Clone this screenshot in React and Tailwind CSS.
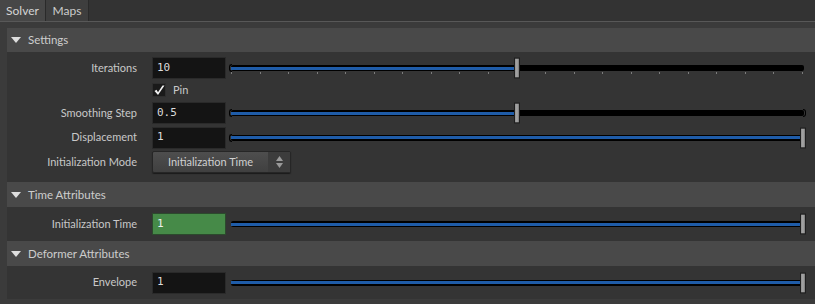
import React from 'react';

const font = { fontFamily: 'Lato, "Noto Sans", sans-serif' };

function Slider({ value, ticks = 0, capLeft = true, capRight = false }) {
  const pos = 2 + value * 572; // handle centre within the 577px box
  return (
    <div className="relative ml-[3px] h-full w-[577px]">
      {capLeft && (
        <div className="absolute left-0 top-1/2 h-[8px] w-[3px] -translate-y-1/2 rounded-l-[3px] border-y border-l border-black" />
      )}
      {capRight && (
        <div className="absolute right-0 top-1/2 h-[8px] w-[3px] -translate-y-1/2 rounded-r-[3px] border-y border-r border-black" />
      )}
      <div className="absolute left-[2px] right-[2px] top-1/2 flex h-[6px] -translate-y-1/2 items-center rounded-[2px] bg-black">
        <div className="h-[3px] bg-[#1f5ca8]" style={{ width: `${value * 100}%` }} />
      </div>
      {ticks > 0 && (
        <div className="absolute left-[2px] right-[3px] top-[15px] flex justify-between">
          {Array.from({ length: ticks + 1 }).map((_, i) => (
            <div key={i} className="h-[2px] w-px bg-[#7c7c7c]" />
          ))}
        </div>
      )}
      <div
        className="absolute top-1/2 h-[21px] w-[6px] -translate-y-1/2 border border-[#1e1e1e] bg-gradient-to-r from-[#8e8e8e] via-[#a8a8a8] to-[#7a7a7a]"
        style={{ left: pos - 3 }}
      />
    </div>
  );
}

function Field({ text, green }) {
  return (
    <div
      className={`flex h-[22px] w-[74px] items-center border px-[4px] text-[11px] ${
        green ? 'border-[#2c4a2d] bg-[#468a48] text-[#f0f0f0]' : 'border-[#2a2a2a] bg-[#141414] text-[#dcdcdc]'
      }`}
      style={{ fontFamily: '"DejaVu Sans Mono", monospace' }}
    >
      {text}
    </div>
  );
}

function Row({ label, h, children }) {
  return (
    <div className={`flex items-center ${h}`}>
      <div className="w-[130px] shrink-0 text-right text-[11px] text-[#c8c8c8]">{label}</div>
      <div className="ml-[15px] flex h-full flex-1 items-center">{children}</div>
    </div>
  );
}

function Header({ title, h }) {
  return (
    <div className={`flex items-center bg-[#494949] ${h}`}>
      <svg width="10" height="6" viewBox="0 0 10 6" className="ml-[4px]">
        <path d="M0 0 H10 L5 6 Z" fill="#dedede" />
      </svg>
      <span className="ml-[7px] text-[11.5px] text-[#cdcdcd]">{title}</span>
    </div>
  );
}

export default function App() {
  return (
    <div className="h-[304px] w-[815px] overflow-hidden bg-[#3b3b3b]" style={font}>
      {/* tabs */}
      <div className="flex h-[21px] bg-[#333333]">
        <div className="flex w-[46px] items-center justify-center border-r border-[#2a2a2a] bg-[#474747] text-[12px] text-[#d4d4d4]">
          Solver
        </div>
        <div className="flex w-[43px] items-center justify-center border-r border-[#2a2a2a] bg-[#3e3e3e] text-[12px] text-[#cccccc]">
          Maps
        </div>
      </div>
      <div className="h-px bg-[#585858]" />

      <div className="ml-[7px] mt-[6px] flex flex-col">
        <Header title="Settings" h="h-[24px]" />
        <div className="flex flex-col bg-[#343434] pb-[8px] pt-[5px]">
          <Row label="Iterations" h="h-[22px]">
            <Field text="10" />
            <Slider value={0.5} ticks={20} />
          </Row>
          <div className="flex h-[22px] items-center pl-[145px]">
            <div className="flex h-[14px] w-[14px] items-center justify-center border border-[#2e2e2e] bg-[#1a1a1a]">
              <svg width="11" height="11" viewBox="0 0 11 11">
                <path d="M0.5 6 L4 10 L10.5 0.5 L8.5 0.5 L4 7.2 L2.5 4.8 Z" fill="#f2f2f2" />
              </svg>
            </div>
            <span className="ml-[7px] text-[11px] text-[#c8c8c8]">Pin</span>
          </div>
          <Row label="Smoothing Step" h="h-[24px]">
            <Field text="0.5" />
            <Slider value={0.5} capRight />
          </Row>
          <Row label="Displacement" h="h-[25px]">
            <Field text="1" />
            <Slider value={1} />
          </Row>
          <Row label="Initialization Mode" h="h-[24px]">
            <div className="flex h-[22px] w-[139px] items-stretch rounded-[2px] border border-[#262626] bg-gradient-to-b from-[#4e4e4e] to-[#404040] shadow-[0_1px_1px_rgba(0,0,0,0.5)]">
              <div className="flex flex-1 items-center justify-center text-[11px] text-[#d0d0d0]">Initialization Time</div>
              <div className="flex w-[22px] flex-col items-center justify-center gap-[2px] bg-[#3c3c3c]">
                <svg width="7" height="5" viewBox="0 0 7 5">
                  <path d="M0 5 H7 L3.5 0 Z" fill="#9a9a9a" />
                </svg>
                <svg width="7" height="5" viewBox="0 0 7 5">
                  <path d="M0 0 H7 L3.5 5 Z" fill="#9a9a9a" />
                </svg>
              </div>
            </div>
          </Row>
        </div>

        <Header title="Time Attributes" h="h-[25px]" />
        <div className="flex flex-col bg-[#343434] py-[5px]">
          <Row label="Initialization Time" h="h-[24px]">
            <Field text="1" green />
            <Slider value={1} capLeft={false} />
          </Row>
        </div>

        <Header title="Deformer Attributes" h="h-[25px]" />
        <div className="flex flex-col bg-[#343434] py-[5px]">
          <Row label="Envelope" h="h-[23px]">
            <Field text="1" />
            <Slider value={1} capLeft={false} />
          </Row>
        </div>
      </div>
    </div>
  );
}
